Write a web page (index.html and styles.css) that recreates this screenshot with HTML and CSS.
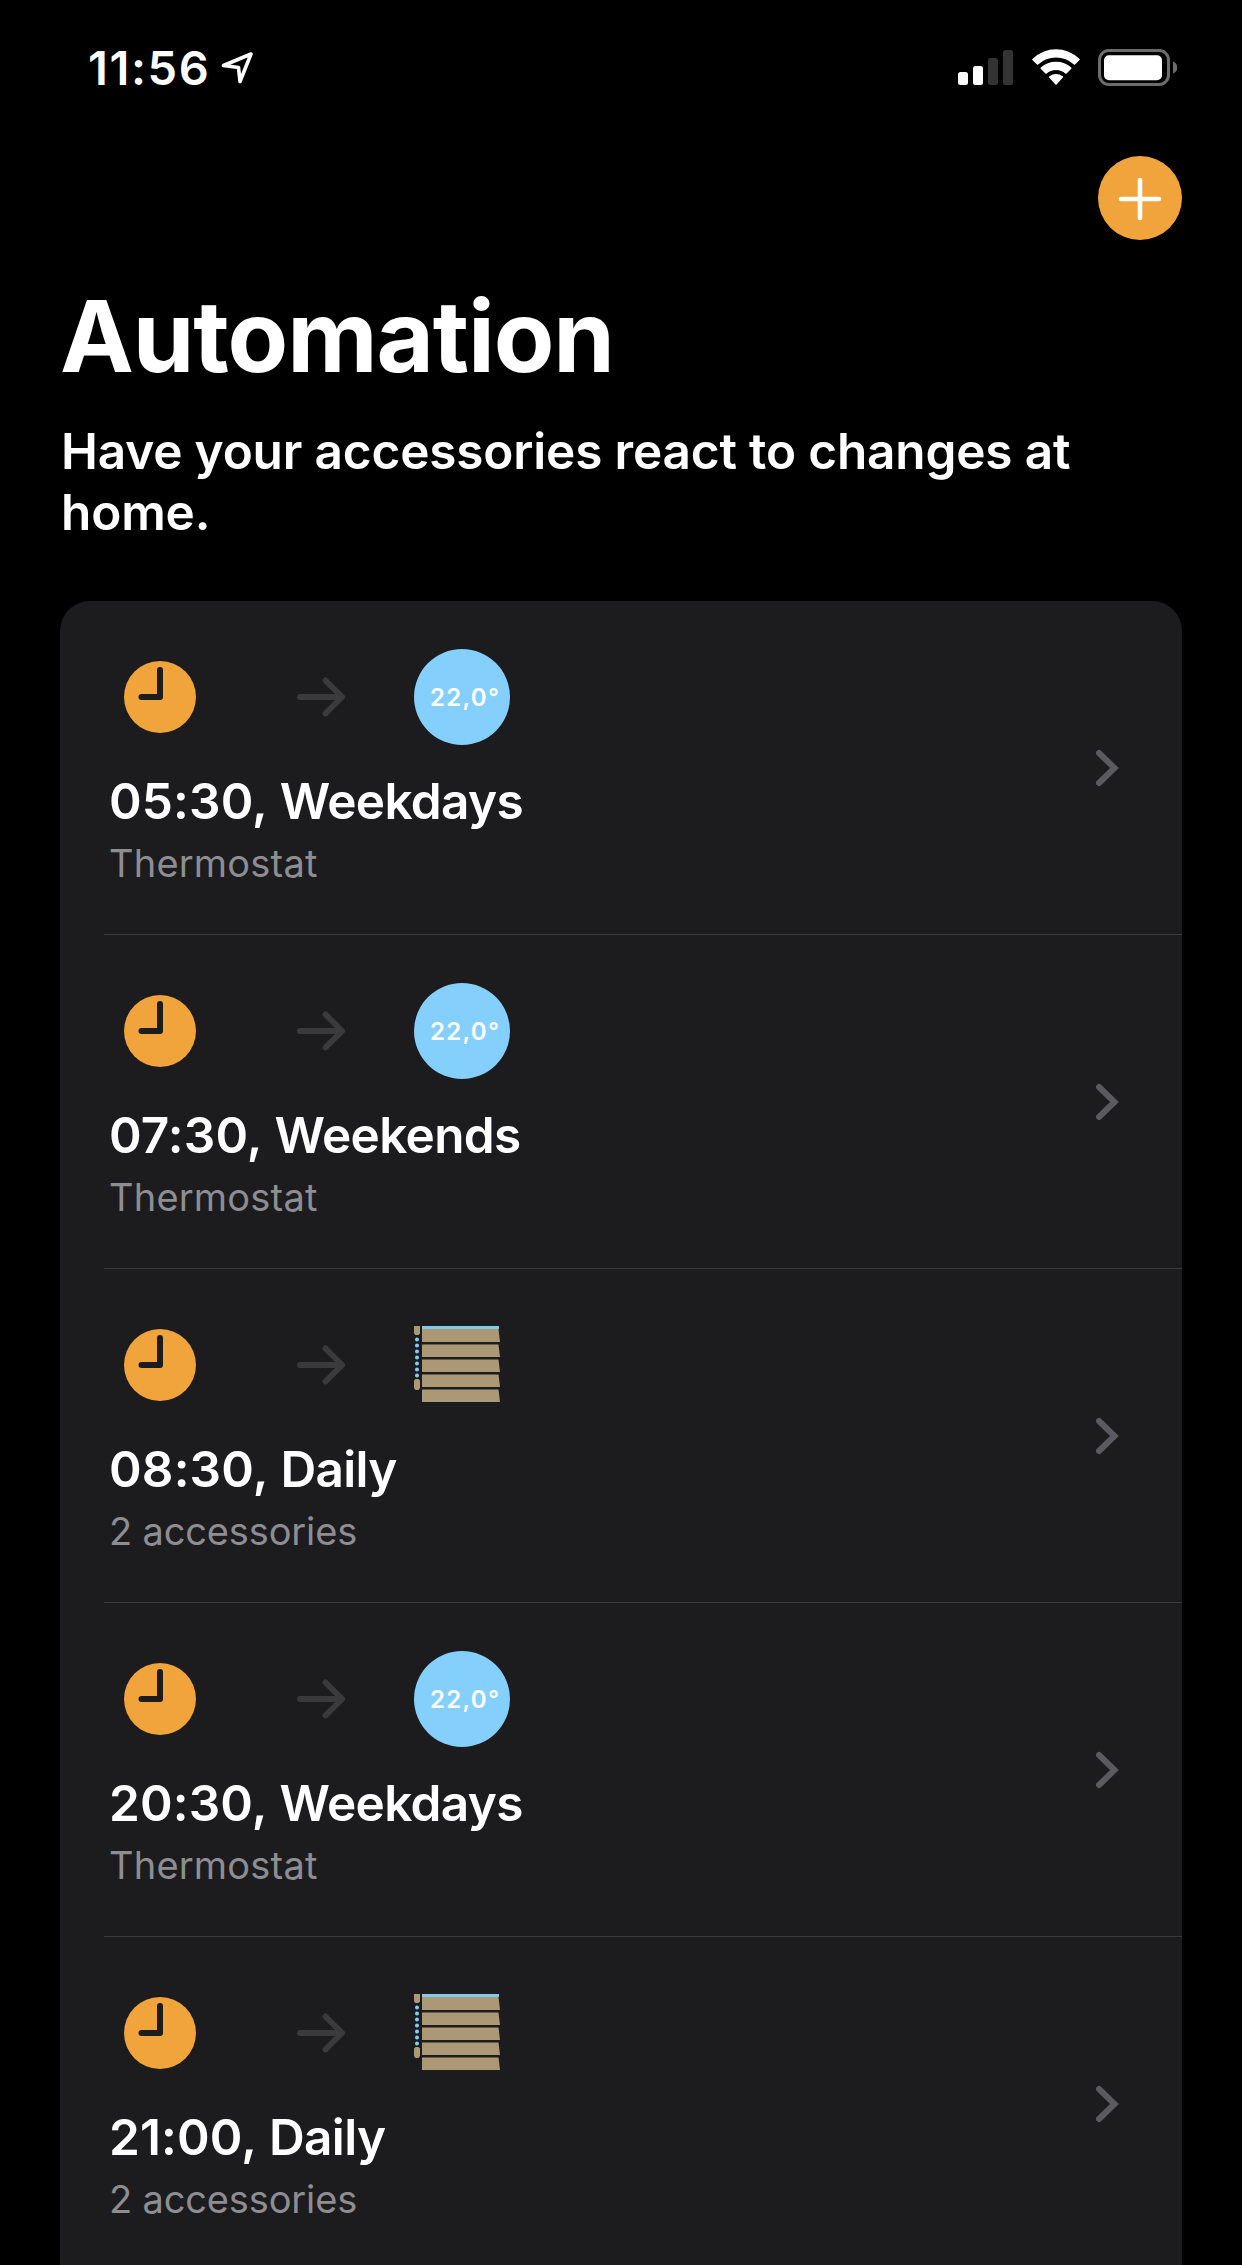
FILE: index.html
```html
<!DOCTYPE html>
<html lang="en">
<head>
<meta charset="utf-8">
<title>Automation</title>
<link rel="stylesheet" href="styles.css">
</head>
<body>
<svg class="symbols" aria-hidden="true">
  <symbol id="clock" viewBox="0 0 72 72">
    <circle cx="36" cy="36" r="36" fill="#f1a33c"/>
    <path d="M36 9v27H17.500" fill="none" stroke="#1c1c1e" stroke-width="6" stroke-linecap="round" stroke-linejoin="round"/>
  </symbol>
  <symbol id="arrow" viewBox="0 0 48 40">
    <path d="M3 20h41M28.500 3.500L45 20 28.500 36.500" fill="none" stroke="#3a3a3c" stroke-width="6" stroke-linecap="round" stroke-linejoin="round"/>
  </symbol>
  <symbol id="chevron" viewBox="0 0 24 38">
    <path d="M4 4l15.500 15L4 34" fill="none" stroke="#5b5b5f" stroke-width="6" stroke-linecap="round" stroke-linejoin="miter"/>
  </symbol>
  <symbol id="blinds" viewBox="0 0 88 78">
    <path d="M8 0h77v3H8z" fill="#7dcbe8"/>
    <path d="M8 3h76.500l1.500 13H8zM8 18.500h76.500l1.500 12.500H8zM8 33.500h76.500L86 46H8zM8 48.500h76.500L86 61H8zM8 63.500h76.500L86 76H8z" fill="#ad9876"/>
    <path d="M0 0h6v7.500l-1.500 1.500h-3L0 7.500zM1.500 53h3L6 54.500V62l-1.500 2h-3L0 62v-7.500z" fill="#ad9876"/>
    <path d="M3 13.500v36.500" fill="none" stroke="#83cdf5" stroke-width="4" stroke-linecap="round" stroke-dasharray="0 6"/>
  </symbol>
</svg>

<header class="status-bar">
  <div class="status-left">
    <span class="time">11:56</span>
    <svg class="location" viewBox="0 0 34 34"><path d="M2.500 14.500L30 3 19 30.500 17.500 16.500z" fill="none" stroke="#fff" stroke-width="3.600" stroke-linejoin="round"/></svg>
  </div>
  <div class="status-right">
    <svg class="signal" viewBox="0 0 55 35"><rect y="22" width="10" height="13" rx="2.500" fill="#fff"/><rect x="15" y="16" width="10" height="19" rx="2.500" fill="#fff"/><rect x="30" y="8" width="10" height="27" rx="2.500" fill="#333"/><rect x="45" width="10" height="35" rx="2.500" fill="#333"/></svg>
    <svg class="wifi" viewBox="0 0 48 36" fill="#fff" stroke="#fff" stroke-linejoin="round" stroke-width="1.600"><path d="M1 10.500Q11 1 24 1t23 9.500L42.500 15Q34.500 7.800 24 7.800T5.500 15z"/><path d="M9.300 19.200Q15.500 13.600 24 13.600t14.700 5.600L34 24q-4.200-3.800-10-3.800T14 24z"/><path d="M17.700 28Q24 23.800 30.300 28L24 35z"/></svg>
    <svg class="battery" viewBox="0 0 80 38"><rect x="1.500" y="1.500" width="69" height="34" rx="9.500" fill="none" stroke="#6c6c6c" stroke-width="3"/><rect x="6" y="6.200" width="58" height="25" rx="5" fill="#fff"/><path d="M75 12.500q4.200 1.500 4.200 6T75 24.500z" fill="#6c6c6c"/></svg>
  </div>
</header>

<main>
  <div class="toolbar">
    <button class="add" aria-label="Add"><svg viewBox="0 0 84 84"><path d="M42 24v38M23 43h38" stroke="#fff" stroke-width="4.600" stroke-linecap="round"/></svg></button>
  </div>
  <h1>Automation</h1>
  <p class="intro">Have your accessories react to changes at home.</p>

  <section class="list">
    <article class="row">
      <div class="body">
        <div class="icons"><svg class="clock"><use href="#clock"/></svg><svg class="arrow"><use href="#arrow"/></svg><span class="temp">22,0°</span></div>
        <h2><span class="at">05:30,</span> Weekdays</h2>
        <p class="sub">Thermostat</p>
      </div>
      <svg class="chevron"><use href="#chevron"/></svg>
    </article>
    <article class="row">
      <div class="body">
        <div class="icons"><svg class="clock"><use href="#clock"/></svg><svg class="arrow"><use href="#arrow"/></svg><span class="temp">22,0°</span></div>
        <h2><span class="at">07:30,</span> Weekends</h2>
        <p class="sub">Thermostat</p>
      </div>
      <svg class="chevron"><use href="#chevron"/></svg>
    </article>
    <article class="row">
      <div class="body">
        <div class="icons"><svg class="clock"><use href="#clock"/></svg><svg class="arrow"><use href="#arrow"/></svg><svg class="blinds"><use href="#blinds"/></svg></div>
        <h2><span class="at">08:30,</span> Daily</h2>
        <p class="sub count">2 accessories</p>
      </div>
      <svg class="chevron"><use href="#chevron"/></svg>
    </article>
    <article class="row">
      <div class="body">
        <div class="icons"><svg class="clock"><use href="#clock"/></svg><svg class="arrow"><use href="#arrow"/></svg><span class="temp">22,0°</span></div>
        <h2><span class="at">20:30,</span> Weekdays</h2>
        <p class="sub">Thermostat</p>
      </div>
      <svg class="chevron"><use href="#chevron"/></svg>
    </article>
    <article class="row">
      <div class="body">
        <div class="icons"><svg class="clock"><use href="#clock"/></svg><svg class="arrow"><use href="#arrow"/></svg><svg class="blinds"><use href="#blinds"/></svg></div>
        <h2><span class="at">21:00,</span> Daily</h2>
        <p class="sub count">2 accessories</p>
      </div>
      <svg class="chevron"><use href="#chevron"/></svg>
    </article>
  </section>
</main>
</body>
</html>
```

FILE: styles.css
```css
* { box-sizing: border-box; margin: 0; padding: 0; }
html, body { background: #000; }
body {
  width: 1242px;
  height: 2265px;
  overflow: hidden;
  color: #fff;
  font-family: Inter, "Liberation Sans", sans-serif;
  font-kerning: normal;
}
svg { display: block; flex: none; }
.symbols { display: none; }

.status-bar {
  display: flex;
  justify-content: space-between;
  height: 136px;
  padding: 38px 64px 0 88px;
}
.status-left { display: flex; gap: 11px; height: 60px; align-items: center; }
.time { font-size: 47px; line-height: 60px; font-weight: 600; letter-spacing: 1.6px; white-space: nowrap; }
.location { width: 34px; height: 34px; }
.status-right { display: flex; align-items: flex-start; padding-top: 11px; }
.signal { width: 55px; height: 35px; margin: 1px 19px 0 0; }
.wifi { width: 48px; height: 36px; margin-right: 18px; }
.battery { width: 80px; height: 38px; }

main { padding: 20px 60px 0; }
.toolbar { display: flex; justify-content: flex-end; height: 120px; }
.add {
  width: 84px;
  height: 84px;
  border: 0;
  border-radius: 50%;
  background: #f1a33c;
}
.add svg { width: 84px; height: 84px; }
h1 { font-size: 99px; line-height: 120px; font-weight: 700; letter-spacing: -1.1px; white-space: nowrap; }
.intro {
  height: 122px;
  margin-top: 25px;
  padding-left: 1px;
  font-size: 49.5px;
  line-height: 61px;
  font-weight: 600;
  letter-spacing: -.16px;
}

.list {
  margin-top: 58px;
  border-radius: 30px 30px 0 0;
  background: #1c1c1f;
}
.row {
  display: flex;
  justify-content: space-between;
  align-items: center;
  height: 334px;
  padding: 0 63px 0 49px;
  background: linear-gradient(#3b3b3e, #3b3b3e) 44px 100% / 100% 1px no-repeat;
}
.body { height: 238px; }
.icons { display: flex; align-items: center; height: 96px; padding-left: 15px; }
.clock { width: 72px; height: 72px; }
.arrow { width: 48px; height: 40px; margin: 0 69px 0 101px; }
.temp {
  width: 96px;
  height: 96px;
  padding-left: 16px;
  border-radius: 50%;
  background: #84cffc;
  font-size: 24px;
  line-height: 97px;
  font-weight: 600;
  letter-spacing: 1.3px;
  white-space: nowrap;
}
.blinds { width: 88px; height: 78px; }
h2 {
  margin-top: 26px;
  font-size: 49.5px;
  line-height: 60px;
  font-weight: 600;
  letter-spacing: -.65px;
  white-space: nowrap;
}
.at { letter-spacing: .15px; }
.sub { margin-top: 9px; font-size: 38px; line-height: 46px; letter-spacing: .2px; color: #8d8d92; white-space: nowrap; }
.count { letter-spacing: -.15px; }
.chevron { width: 24px; height: 38px; }
```
